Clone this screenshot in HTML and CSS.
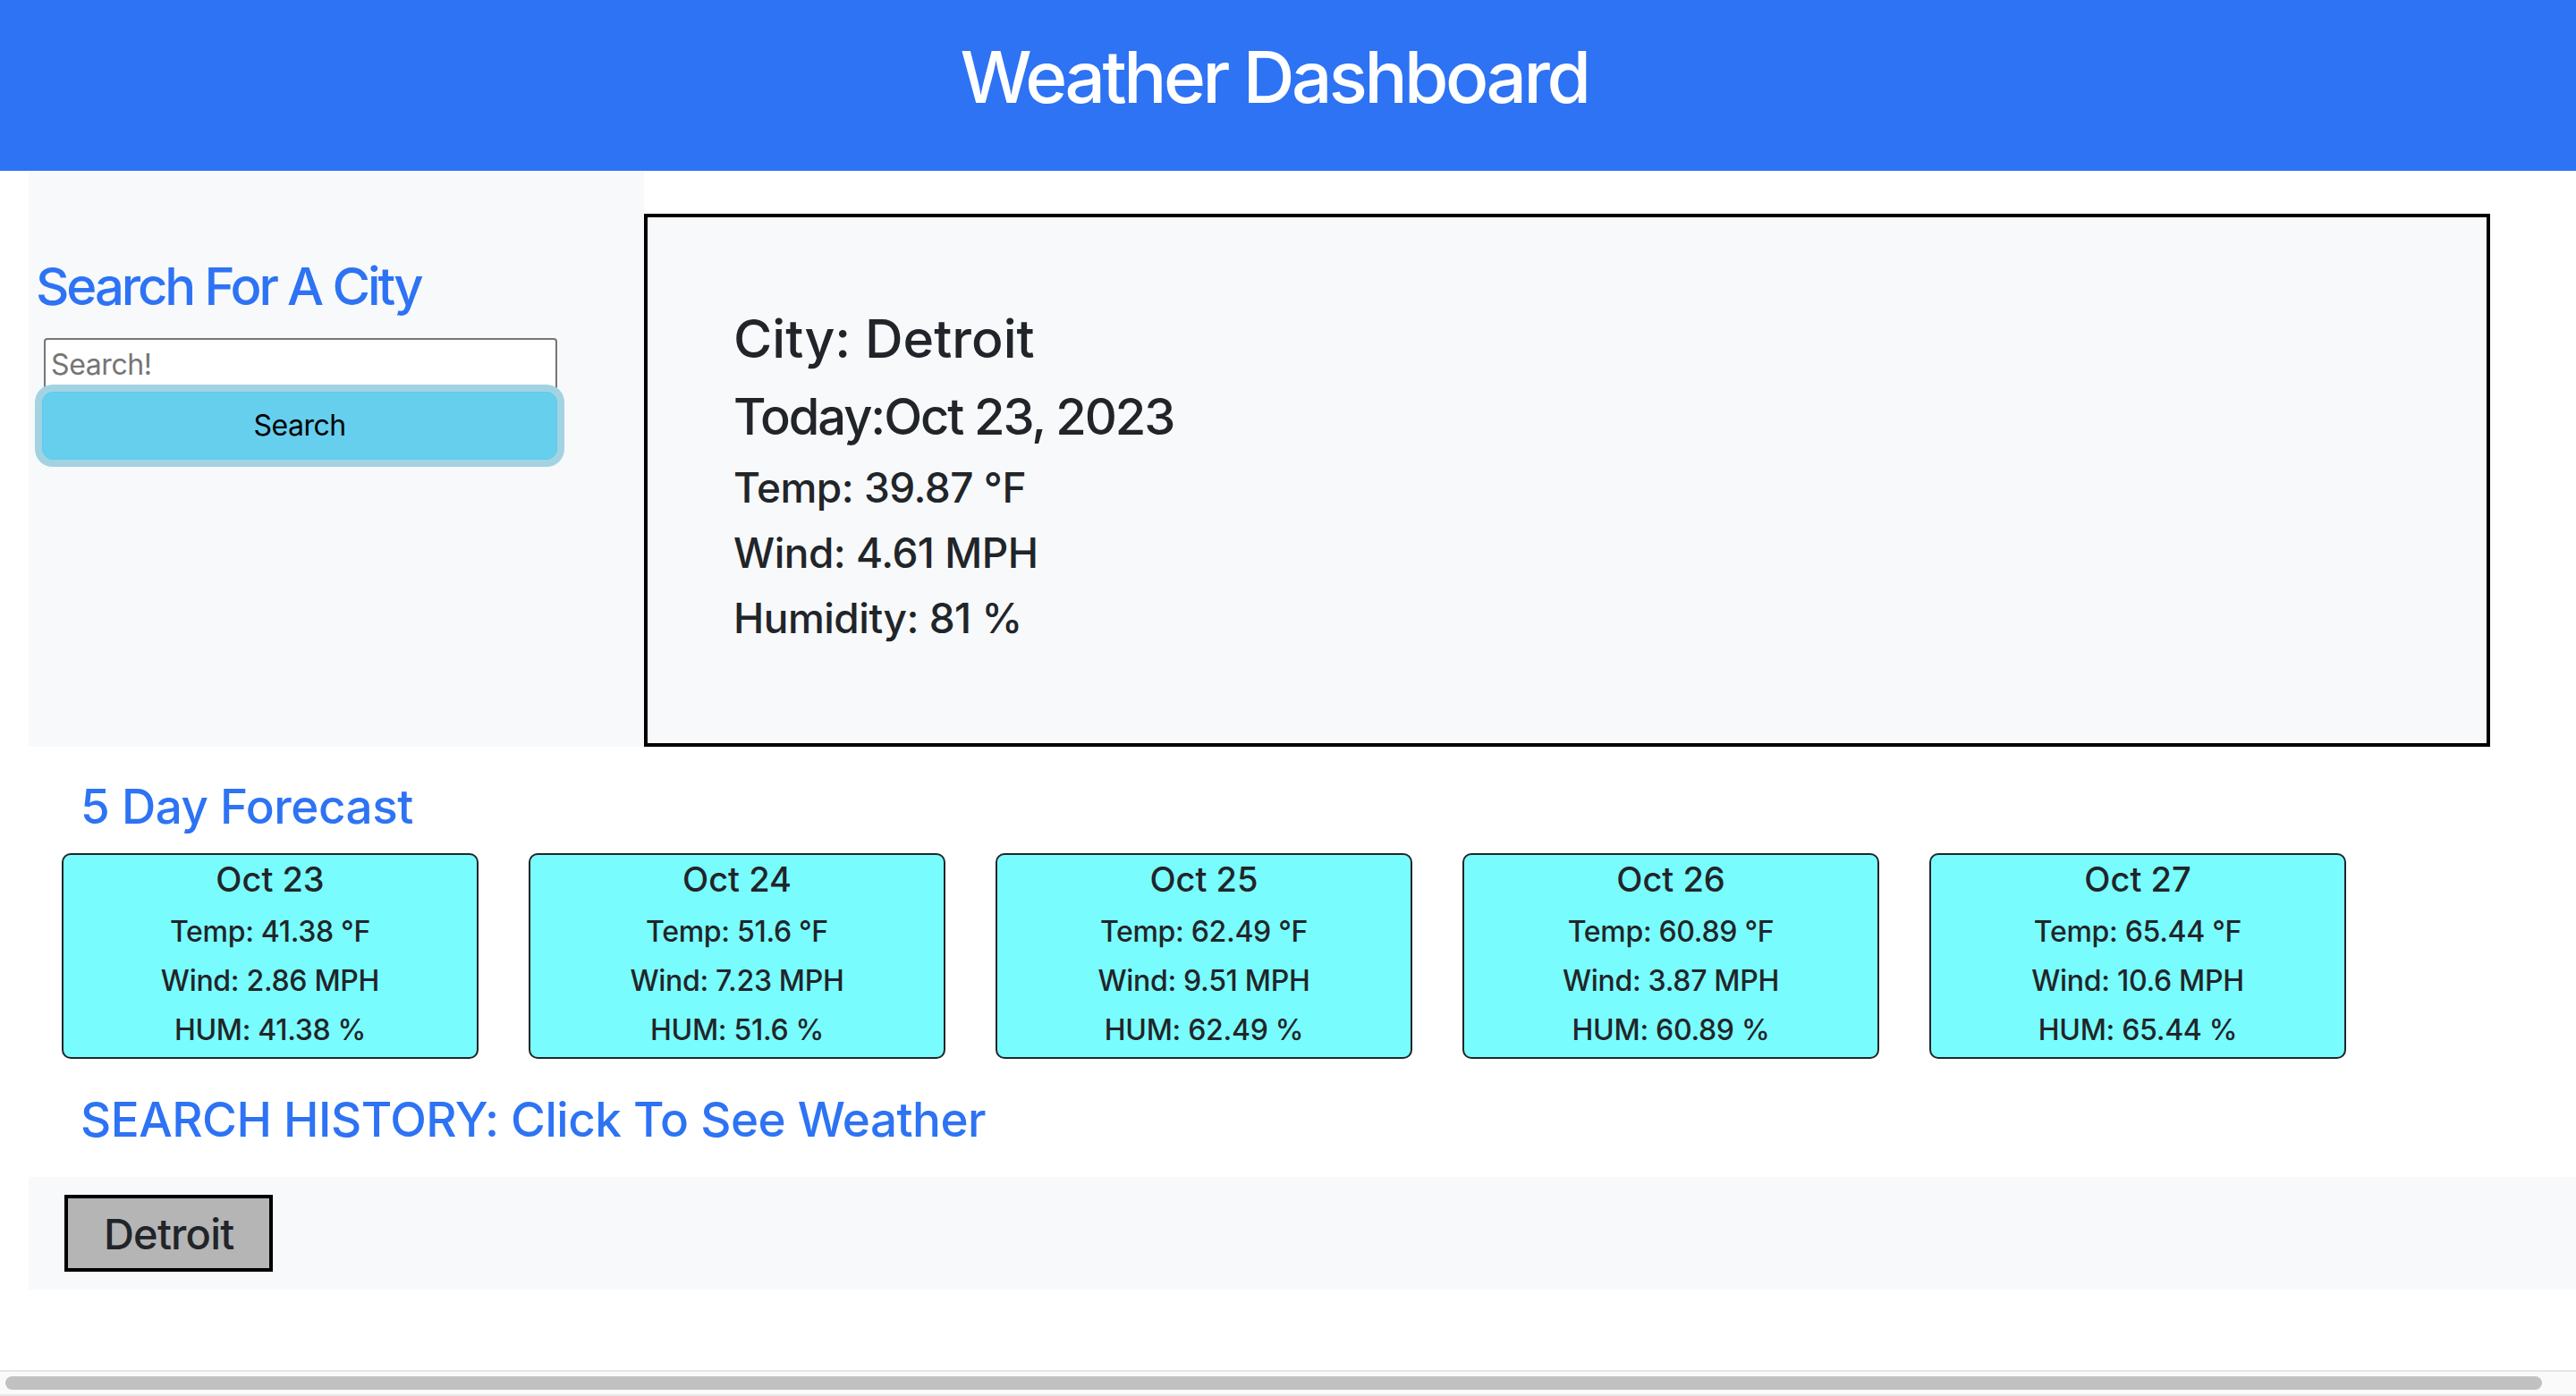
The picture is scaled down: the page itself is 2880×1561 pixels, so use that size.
FILE: index.html
```html
<!DOCTYPE html>
<html lang="en">
<head>
<meta charset="utf-8">
<title>Weather Dashboard</title>
<link rel="stylesheet" href="styles.css">
</head>
<body>
<header class="site-header">
  <h1 class="site-title">Weather Dashboard</h1>
</header>
<main class="page">
  <section class="top-row">
    <aside class="search-panel">
      <h2 class="search-title">Search For A City</h2>
      <input class="search-input" type="text" placeholder="Search!">
      <button class="search-btn" type="button">Search</button>
    </aside>
    <section class="current">
      <h2 class="cur-city">City: Detroit</h2>
      <h3 class="cur-date">Today:Oct 23, 2023</h3>
      <p class="cur-stat">Temp: 39.87 °F</p>
      <p class="cur-stat">Wind: 4.61 MPH</p>
      <p class="cur-stat">Humidity: 81 %</p>
    </section>
  </section>

  <h2 class="section-title forecast-title">5 Day Forecast</h2>
  <div class="cards">
    <div class="card">
      <h4 class="card-date">Oct 23</h4>
      <p class="card-stat">Temp: 41.38 °F</p>
      <p class="card-stat">Wind: 2.86 MPH</p>
      <p class="card-stat">HUM: 41.38 %</p>
    </div>
    <div class="card">
      <h4 class="card-date">Oct 24</h4>
      <p class="card-stat">Temp: 51.6 °F</p>
      <p class="card-stat">Wind: 7.23 MPH</p>
      <p class="card-stat">HUM: 51.6 %</p>
    </div>
    <div class="card">
      <h4 class="card-date">Oct 25</h4>
      <p class="card-stat">Temp: 62.49 °F</p>
      <p class="card-stat">Wind: 9.51 MPH</p>
      <p class="card-stat">HUM: 62.49 %</p>
    </div>
    <div class="card">
      <h4 class="card-date">Oct 26</h4>
      <p class="card-stat">Temp: 60.89 °F</p>
      <p class="card-stat">Wind: 3.87 MPH</p>
      <p class="card-stat">HUM: 60.89 %</p>
    </div>
    <div class="card">
      <h4 class="card-date">Oct 27</h4>
      <p class="card-stat">Temp: 65.44 °F</p>
      <p class="card-stat">Wind: 10.6 MPH</p>
      <p class="card-stat">HUM: 65.44 %</p>
    </div>
  </div>

  <h2 class="section-title history-title">SEARCH HISTORY: Click To See Weather</h2>
  <div class="history">
    <button class="history-btn" type="button">Detroit</button>
  </div>
</main>
<div class="scrollbar"><div class="scroll-thumb"></div></div>
</body>
</html>
```

FILE: styles.css
```css
html, body {
  margin: 0;
  padding: 0;
  overflow: hidden;
  background: #ffffff;
}

body {
  font-family: Inter, "Noto Sans", sans-serif;
  color: #212529;
  width: 2880px;
  height: 1561px;
}

h1, h2, h3, h4, p {
  margin: 0;
  font-weight: 500;
}

.site-header {
  background: #2d73f4;
  height: 191px;
  box-sizing: border-box;
  padding: 38px 31px 0 0;
  text-align: center;
}

.site-title {
  color: #ffffff;
  font-size: 80px;
  line-height: 96px;
  letter-spacing: -3.5px;
}

.page {
  padding-left: 32px;
}

.top-row {
  display: grid;
  grid-template-columns: 688px 2064px;
}

.search-panel {
  background: #f8f9fa;
  padding: 95px 0 0 8px;
  display: flex;
  flex-direction: column;
  align-items: flex-start;
}

.search-title {
  color: #2d73f4;
  font-size: 58px;
  line-height: 1.2;
  letter-spacing: -3.1px;
  margin-bottom: 22px;
}

.search-input {
  box-sizing: border-box;
  width: 574px;
  height: 59px;
  margin-left: 9px;
  border: 2px solid #767676;
  border-radius: 4px;
  padding: 0 6px;
  font-family: inherit;
  font-size: 32px;
  letter-spacing: -0.4px;
  background: #ffffff;
  color: #212529;
  outline: none;
}

.search-input::placeholder {
  color: #757575;
}

.search-btn {
  box-sizing: border-box;
  width: 576px;
  height: 76px;
  margin: 1px 0 0 7px;
  border: 1px solid #5fcbea;
  border-radius: 12px;
  background: #66cfee;
  box-shadow: 0 0 0 8px #a3d3e2;
  font-family: inherit;
  font-size: 32px;
  letter-spacing: -0.5px;
  color: #000000;
  padding: 0;
}

.current {
  margin-top: 48px;
  height: 596px;
  box-sizing: border-box;
  border: 4px solid #000000;
  background: #f8f9fa;
  padding: 101px 96px 0 96px;
}

.cur-city {
  font-size: 59px;
  line-height: 1.2;
  margin-bottom: 18px;
}

.cur-date {
  font-size: 56px;
  line-height: 1.2;
  letter-spacing: -2.1px;
  margin-bottom: 18px;
}

.cur-stat {
  font-size: 46px;
  line-height: 1.2;
  letter-spacing: -0.5px;
  margin-bottom: 18px;
}

.section-title {
  color: #2d73f4;
  font-size: 53px;
  line-height: 1.2;
  letter-spacing: -0.5px;
  margin-left: 58px;
}

.forecast-title {
  margin-top: 36px;
}

.cards {
  display: flex;
  gap: 56px;
  margin: 19px 0 0 37px;
}

.card {
  box-sizing: border-box;
  width: 466px;
  height: 230px;
  border: 2px solid #212529;
  border-radius: 10px;
  background: #79fcfd;
  text-align: center;
  padding-top: 5px;
}

.card-date {
  font-size: 38px;
  line-height: 1.2;
  margin-bottom: 8px;
}

.card-stat {
  font-size: 32px;
  line-height: 55px;
  letter-spacing: -0.3px;
}

.history-title {
  margin-top: 37px;
}

.history {
  margin-top: 32px;
  background: #f8f9fa;
  height: 126px;
  box-sizing: border-box;
  padding: 20px 40px;
}

.history-btn {
  box-sizing: border-box;
  height: 86px;
  border: 4px solid #000000;
  background: #b5b5b5;
  padding: 0 40px;
  font-family: inherit;
  font-size: 47px;
  font-weight: 500;
  letter-spacing: -0.8px;
  color: #212529;
  border-radius: 0;
}

.scrollbar {
  position: fixed;
  left: 0;
  right: 0;
  bottom: 0;
  height: 29px;
  box-sizing: border-box;
  background: #fafafa;
  border-top: 2px solid #e6e6e6;
  border-bottom: 2px solid #e8e8e8;
  padding: 5px 38px 0 6px;
}

.scroll-thumb {
  height: 15px;
  border-radius: 8px;
  background: #c1c1c1;
}
```
